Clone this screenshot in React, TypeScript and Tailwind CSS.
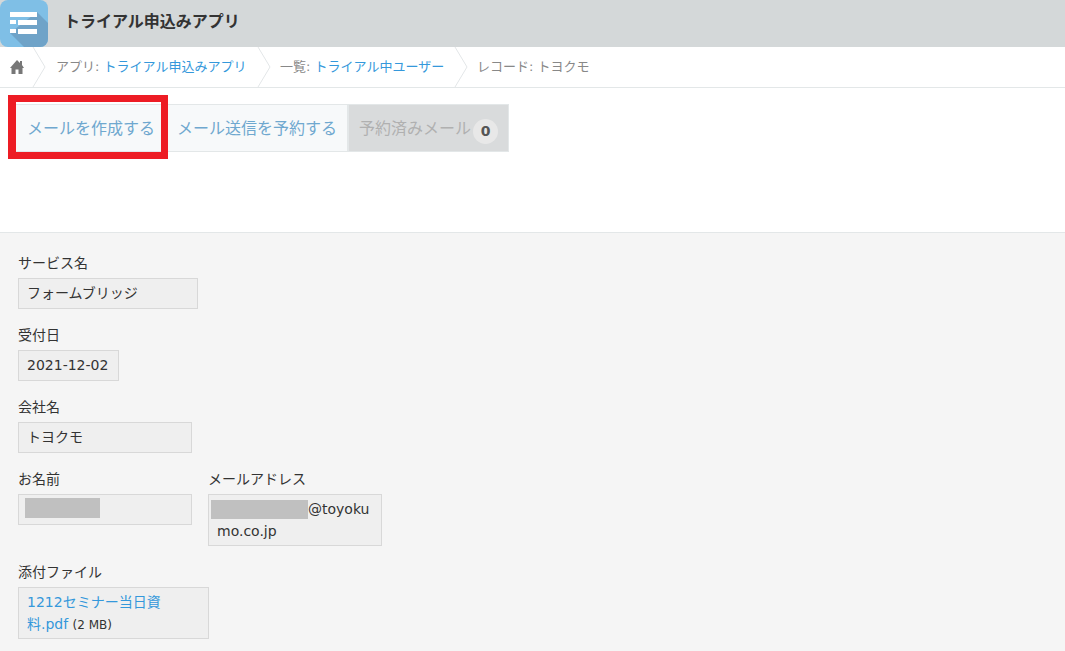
const font = { fontFamily: '"DejaVu Sans", "Noto Sans CJK JP", sans-serif' };

function Chevron() {
  return (
    <svg width="14" height="40" viewBox="0 0 14 40" className="shrink-0" fill="none" stroke="#e3e7e8" strokeWidth="1">
      <path d="M1 0 L13 20 L1 40" />
    </svg>
  );
}

function Field({ label, width, children }: { label: string; width: string; children: React.ReactNode }) {
  return (
    <div className="flex flex-col">
      <div className="h-[25px] text-sm leading-[20px] text-[#333]">{label}</div>
      <div className={`${width} min-h-[31px] border border-[#d8d8d8] bg-[#efefef] px-2 py-[3px] text-sm leading-[22px] text-[#333]`}>
        {children}
      </div>
    </div>
  );
}

export default function App() {
  return (
    <div className="flex h-screen flex-col overflow-hidden bg-white" style={font}>
      <header className="flex h-[47px] shrink-0 items-center bg-[#d4d8d9]">
        <svg width="48" height="47" viewBox="0 0 48 47" className="shrink-0">
          <rect width="48" height="47" rx="8" fill="#7fbfe6" />
          <path d="M10 33 L37 12 L48 23 V39a8 8 0 0 1-8 8H24Z" fill="#6fa3c8" />
          <g fill="#fff">
            <rect x="10" y="12" width="27" height="5" />
            <rect x="10" y="20" width="6" height="4" />
            <rect x="18" y="20" width="19" height="5" />
            <rect x="10" y="29" width="6" height="4" />
            <rect x="18" y="29" width="19" height="5" />
          </g>
        </svg>
        <h1 className="-mt-[3px] ml-4 text-base leading-none font-bold text-[#333]">トライアル申込みアプリ</h1>
      </header>

      <nav className="flex h-[41px] shrink-0 items-center border-b border-[#e3e7e8] text-[13px] text-[#888]">
        <svg width="16" height="16" viewBox="0 0 16 16" className="mr-[7px] ml-[9px] shrink-0" fill="#777">
          <path d="M8 1 L11 4 V2 H13 V6 L15 9 H13.5 V15 H9.5 V10.5 H6.5 V15 H2.5 V9 H1 Z" />
        </svg>
        <Chevron />
        <span className="mr-[8px] ml-[10px] w-[193px] whitespace-nowrap">
          アプリ: <span className="text-[#3498db]">トライアル申込みアプリ</span>
        </span>
        <Chevron />
        <span className="mr-[8px] ml-[9px] w-[166px] whitespace-nowrap">
          一覧: <span className="text-[#3498db]">トライアル中ユーザー</span>
        </span>
        <Chevron />
        <span className="ml-[9px] whitespace-nowrap">レコード: トヨクモ</span>
      </nav>

      <div className="h-[145px] shrink-0 border-b border-[#e3e7e8] pt-4 pl-[15px]">
        <div className="flex h-12 items-stretch text-base">
          <div className="relative flex w-[148px] items-center border border-[#e3e7e8] bg-[#f7f9fa] pt-[2px] pl-[11px] text-[#6fa8cf]">
            メールを作成する
            <div className="absolute -top-[10px] -right-[6px] -bottom-[8px] -left-[8px] border-[7px] border-l-8 border-[#ed1c24]" />
          </div>
          <div className="ml-px flex w-[184px] items-center border border-l-0 border-[#e3e7e8] bg-[#f7f9fa] pt-[2px] pl-[13px] text-[#6fa8cf]">
            メール送信を予約する
          </div>
          <div className="flex w-[161px] items-center border border-[#e3e7e8] bg-[#d9dbdc] pt-[2px] pl-[11px] text-[#b0b0b0]">
            <span className="-ml-px">予約済みメール</span>
            <span className="mt-[4px] ml-[2px] flex h-[25px] w-[25px] items-center justify-center rounded-full bg-[#e8e8e8] text-sm font-bold text-[#555]">
              0
            </span>
          </div>
        </div>
      </div>

      <main className="flex grow flex-col gap-[16px] bg-[#f5f5f5] pt-[20px] pl-[18px]">
        <Field label="サービス名" width="w-[180px]">フォームブリッジ</Field>
        <Field label="受付日" width="w-[101px]">2021-12-02</Field>
        <Field label="会社名" width="w-[174px]">トヨクモ</Field>
        <div className="flex gap-4">
          <Field label="お名前" width="w-[174px] !p-0 !pt-[3px] !pl-[6px]">
            <div className="h-5 w-[75px] bg-[#c0c0c0]" />
          </Field>
          <Field label="メールアドレス" width="w-[174px] relative">
            xxxxxxxxxxe@toyoku
            <br />
            mo.co.jp
            <div className="absolute top-[5px] left-[2px] h-[19px] w-[97px] bg-[#c0c0c0]" />
          </Field>
        </div>
        <Field label="添付ファイル" width="w-[191px]">
          <span className="text-[#3498db]">
            1212セミナー当日資
            <br />
            料.pdf
          </span>{" "}
          <span className="text-xs">(2 MB)</span>
        </Field>
      </main>
    </div>
  );
}
